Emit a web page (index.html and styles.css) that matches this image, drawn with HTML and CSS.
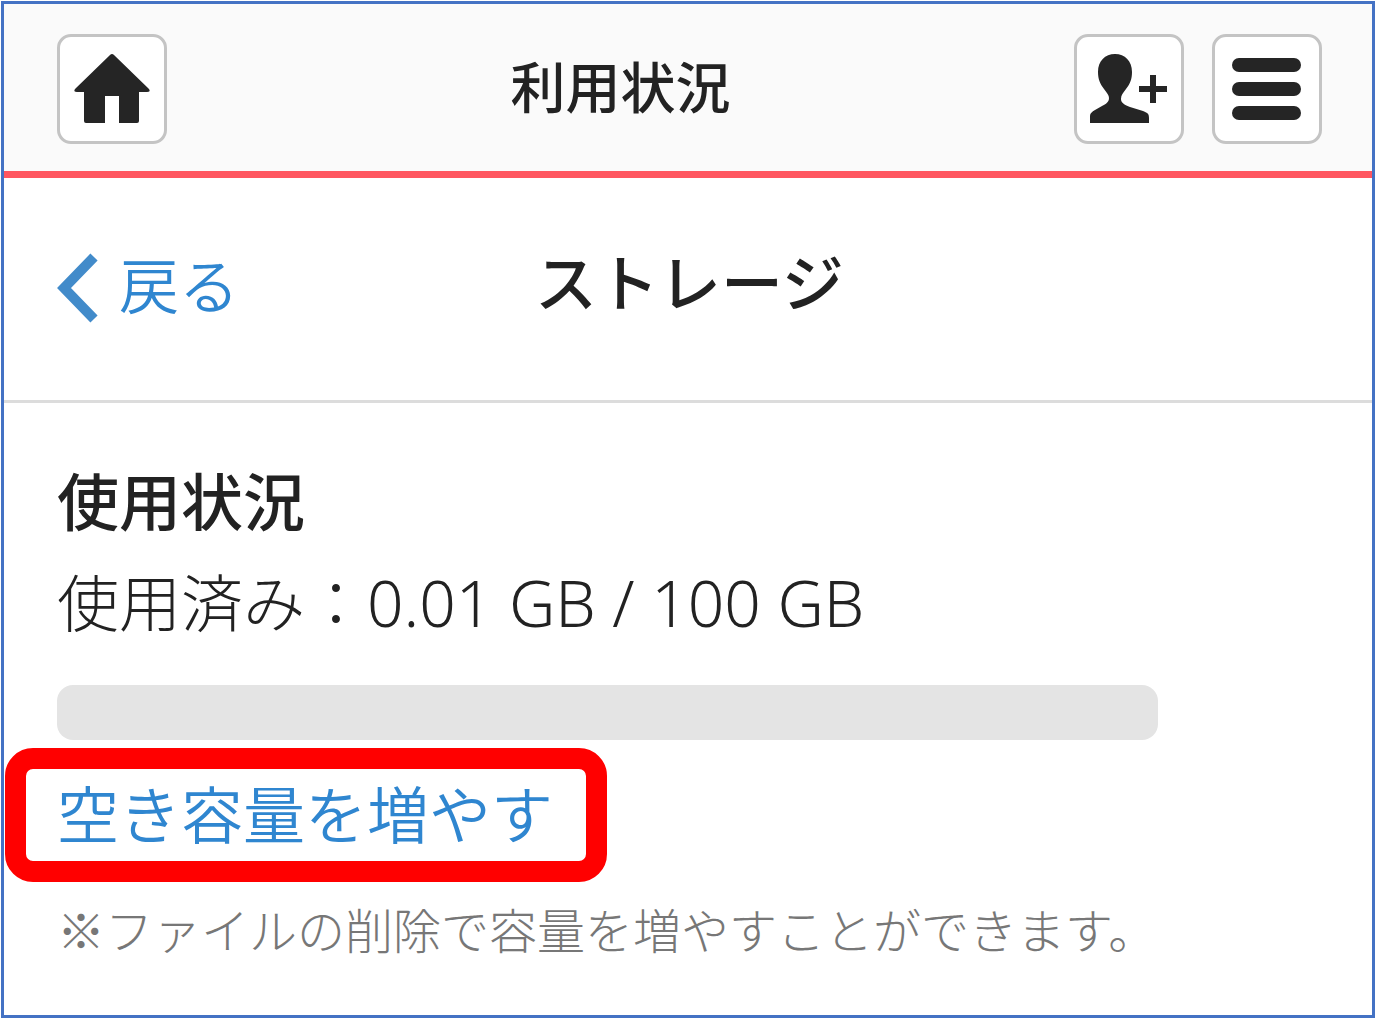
FILE: index.html
```html
<!DOCTYPE html>
<html lang="ja">

<head>
    <meta charset="UTF-8">
    <meta name="viewport" content="width=device-width, initial-scale=1.0">
    <title>利用状況</title>
    <link rel="stylesheet" href="styles.css">
</head>

<body>
    <header class="header">
        <button type="button" class="iconbtn" aria-label="ホーム">
            <svg viewBox="0 0 80 72" aria-hidden="true">
                <path d="M38 2Q40 0 42 2L77 36Q79 39 75 39H67V68Q67 70 65 70H47V43H33V70H14Q12 70 12 68V39H5Q1 39 3 36Z" />
            </svg>
        </button>
        <h1 class="title">利用状況</h1>
        <div class="headerbtns">
            <button type="button" class="iconbtn" aria-label="メンバー追加">
                <svg viewBox="0 0 80 72" aria-hidden="true">
                    <path d="M26 1C36 1 43 8 43 19C43 26 41 31 37 36C34 40 32 42 32 46C32 50 36 52 41 54L54 58C59 60 60 61 60 65V70H1V63C1 60 3 59 6 57L13 53C17 51 20 49 20 45C20 42 18 40 15 36C11 31 9 26 9 19C9 8 16 1 26 1Z" />
                    <path d="M61 22H67V33H78V39H67V50H61V39H50V33H61Z" />
                </svg>
            </button>
            <button type="button" class="iconbtn" aria-label="メニュー">
                <svg viewBox="0 0 80 72" aria-hidden="true">
                    <rect x="5" y="5" width="69" height="14" rx="7" />
                    <rect x="5" y="29" width="69" height="14" rx="7" />
                    <rect x="5" y="53" width="69" height="14" rx="7" />
                </svg>
            </button>
        </div>
    </header>

    <nav class="subheader">
        <a href="#" class="back">
            <svg class="chevron" viewBox="0 0 42 70" aria-hidden="true">
                <path d="M37 4L7 35L37 66" />
            </svg>
            <span class="backtext">戻る</span>
        </a>
        <h2 class="subtitle">ストレージ</h2>
    </nav>

    <main class="content">
        <h3 class="heading">使用状況</h3>
        <p class="usage">使用済み：<span class="amount">0.01 GB / 100 GB</span></p>
        <div class="bar" role="progressbar" aria-label="使用状況" aria-valuenow="0.01" aria-valuemin="0" aria-valuemax="100"></div>
        <a href="#" class="increase">空き容量を増やす</a>
        <p class="note">※ファイルの削除で容量を増やすことができます。</p>
    </main>
</body>

</html>
```
FILE: styles.css
```css
* {
    box-sizing: border-box;
}

body {
    min-height: calc(100vh - 2px);
    margin: 1px;
    border: 3px solid #4472c4;
    background-color: #fff;
    color: #222;
    font-family: "Noto Sans CJK JP", sans-serif;
    font-size: 62px;
}

h1,
h2,
h3,
p {
    margin: 0;
}

a {
    color: #2f86d0;
    text-decoration: none;
}

.header {
    display: flex;
    align-items: center;
    padding: 30px 50px 27px 53px;
    background-color: #fafafa;
    border-bottom: 7px solid #ff5660;
}

.title {
    flex: 1;
    padding-bottom: 10px;
    text-align: center;
    font-size: 55px;
    font-weight: 500;
    line-height: 80px;
}

.headerbtns {
    display: flex;
    gap: 28px;
}

.iconbtn {
    display: flex;
    align-items: center;
    justify-content: center;
    width: 110px;
    height: 110px;
    padding: 0;
    background-color: #fff;
    border: 3px solid #c4c4c4;
    border-radius: 14px;
}

.iconbtn svg {
    width: 80px;
    height: 72px;
    fill: #252525;
}

.subheader {
    display: grid;
    grid-template-columns: 1fr auto 1fr;
    align-items: center;
    padding: 70px 50px 72px 53px;
    border-bottom: 3px solid #dcdcdc;
    line-height: 64px;
}

.back {
    display: flex;
    align-items: center;
    gap: 20px;
    font-size: 60px;
    font-weight: 350;
}

.backtext {
    padding-bottom: 10px;
}

.chevron {
    width: 42px;
    height: 70px;
    fill: none;
    stroke: #428bca;
    stroke-width: 10;
}

.subtitle {
    padding-bottom: 16px;
    font-size: 62px;
    font-weight: 500;
}

.content {
    padding: 46px 50px 0 53px;
}

.heading {
    font-size: 62px;
    font-weight: 500;
    line-height: 100px;
}

.usage {
    font-family: "Noto Sans", "Noto Sans CJK JP", sans-serif;
    font-weight: 300;
    line-height: 108px;
}

.amount {
    font-size: 64px;
    line-height: 1;
}

.bar {
    width: 87%;
    height: 55px;
    margin-top: 28px;
    background-color: #e4e4e4;
    border-radius: 16px;
}

.increase {
    display: block;
    position: relative;
    width: fit-content;
    margin-top: 22px;
    font-weight: 350;
    line-height: 100px;
}

/* 赤枠 */
.increase::after {
    content: "";
    position: absolute;
    inset: -14px -54px -20px -52px;
    border: 21px solid #f00;
    border-radius: 28px;
}

.note {
    margin-top: 30px;
    color: #777;
    font-size: 48px;
    font-weight: 300;
    line-height: 72px;
}
```
